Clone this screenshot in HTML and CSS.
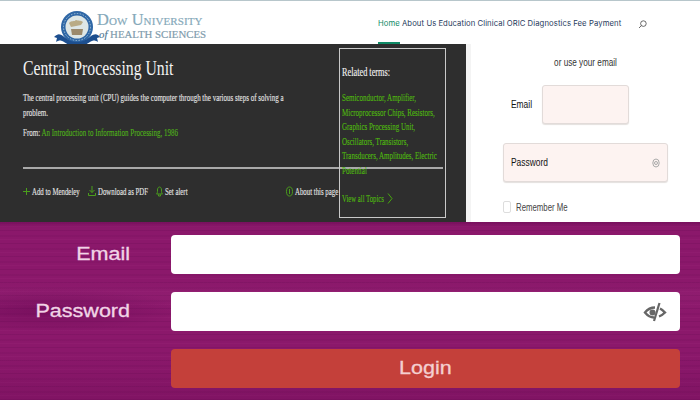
FILE: index.html
```html
<!DOCTYPE html>
<html lang="en">
<head>
  <meta charset="UTF-8" />
  <title>Dow University login</title>
  <link rel="stylesheet" href="styles.css">
</head>
<body>
  <div class="top">
    <header class="header">
      <div class="brand">
        <svg class="seal" width="48" height="36" viewBox="0 0 48 36">
          <circle cx="24" cy="17" r="16" fill="#2f67a6"/>
          <circle cx="24" cy="17" r="13.500" fill="none" stroke="#9fc0d8" stroke-width="1" stroke-dasharray="1.500 1.500"/>
          <circle cx="24" cy="17" r="11.500" fill="#dde6e6"/>
          <path d="M16 13c3-3 5-1 7-3 2 1 5 0 7 2l-2 3-5 1-5 1z" fill="#b9ab85"/>
          <path d="M18 19h12l-1 6h-10z" fill="#9c8a6c"/>
          <path d="M1 27c4-4 6-3 9-1l4 3c6 4 14 4 20 0l4-3c3-2 6-3 9 1l-3 1 1 4c-3-2-5-2-8 0-8 6-18 6-26 0-3-2-5-2-8 0l1-4z" fill="#1d4f8f"/>
        </svg>
        <div class="brand-text">
          <div class="brand-top">Dow University</div>
          <div class="brand-bottom"><em>of</em> HEALTH SCIENCES</div>
        </div>
      </div>
      <nav class="nav">
        <a class="nav-item active">Home</a>
        <a class="nav-item">About Us</a>
        <a class="nav-item">Education</a>
        <a class="nav-item">Clinical</a>
        <a class="nav-item">ORIC</a>
        <a class="nav-item">Diagnostics</a>
        <a class="nav-item">Fee Payment</a>
      </nav>
      <svg class="search" width="9" height="9" viewBox="0 0 9 9">
        <circle cx="5.400" cy="3.600" r="2.800" fill="none" stroke="#444" stroke-width=".8"/>
        <path d="M3.400 5.600L1 8" stroke="#444" stroke-width=".8"/>
      </svg>
    </header>

    <div class="content">
      <section class="panel">
        <h1 class="title"><span>Central Processing Unit</span></h1>
        <p class="desc"><span>The central processing unit (CPU) guides the computer through the various steps of solving a<br>problem.</span></p>
        <p class="from"><span>From: <a>An Introduction to Information Processing, 1986</a></span></p>
        <hr class="rule">
        <div class="actions">
          <div class="action mendeley">
            <svg width="7" height="9" viewBox="0 0 7 9"><path d="M3.500 1v7M0 4.500h7" stroke="#4a9e1c"/></svg>
            <span>Add to Mendeley</span>
          </div>
          <div class="action pdf">
            <svg width="8" height="10" viewBox="0 0 8 10"><path d="M4 0v6.500M1.500 4L4 6.500 6.500 4M.5 7v2.500h7V7" fill="none" stroke="#4a9e1c"/></svg>
            <span>Download as PDF</span>
          </div>
          <div class="action alert">
            <svg width="7" height="12" viewBox="0 0 7 12"><path d="M.5 9c1-1 1-2 1-4 0-4 4-4 4 0 0 2 0 3 1 4zM2.500 9.500v1.500h2V9.500" fill="none" stroke="#4a9e1c"/></svg>
            <span>Set alert</span>
          </div>
          <div class="action about">
            <svg width="7" height="11" viewBox="0 0 7 11"><ellipse cx="3.500" cy="5.500" rx="3" ry="4.500" fill="none" stroke="#4a9e1c"/><path d="M3.500 3v5" stroke="#4a9e1c"/></svg>
            <span>About this page</span>
          </div>
        </div>
        <aside class="related">
          <h2 class="related-title"><span>Related terms:</span></h2>
          <p class="related-links"><span>Semiconductor, Amplifier,<br>Microprocessor Chips, Resistors,<br>Graphics Processing Unit,<br>Oscillators, Transistors,<br>Transducers, Amplitudes, Electric<br>Potential</span></p>
          <div class="related-all">
            <span>View all Topics</span>
            <svg width="6" height="11" viewBox="0 0 6 11"><path d="M1 .5l4 5-4 5" fill="none" stroke="#47a80e"/></svg>
          </div>
        </aside>
      </section>

      <section class="signin">
        <p class="or-email">or use your email</p>
        <div class="email-row">
          <label class="small-label">Email</label>
          <div class="pink-input email-box"></div>
        </div>
        <div class="pink-input password-box">
          <span class="small-label">Password</span>
          <svg width="8" height="10" viewBox="0 0 8 10"><ellipse cx="4" cy="5" rx="3.200" ry="4" fill="none" stroke="#aaa"/><circle cx="4" cy="5" r="1.500" fill="none" stroke="#aaa"/></svg>
        </div>
        <div class="remember">
          <span class="check"></span>
          <span class="remember-text">Remember Me</span>
        </div>
      </section>
    </div>
  </div>

  <form class="login">
    <label class="login-label">Email</label>
    <div class="login-input"></div>
    <label class="login-label">Password</label>
    <div class="login-input eye-field">
      <svg width="24" height="20" viewBox="0 0 24 20">
        <path d="M12 5.500C7 5.500 4 8 2 10.500 4 13 7 15.500 11 15.500" fill="none" stroke="#666" stroke-width="2.400"/>
        <circle cx="9.500" cy="10.500" r="3" fill="#666"/>
        <path d="M16.500 1L11 19" stroke="#666" stroke-width="2.200"/>
        <path d="M17 6.500c2 1 3.500 2.500 5 4-1.500 1.500-3.500 3-6 4" fill="none" stroke="#666" stroke-width="2.400"/>
      </svg>
    </div>
    <button class="login-btn" type="button"><span>Login</span></button>
  </form>
</body>
</html>
```

FILE: styles.css
```css
* {
  box-sizing: border-box;
}
html, body {
  margin: 0;
  height: 400px;
  overflow: hidden;
}
body {
  background: #fff;
  font-family: "Liberation Sans", sans-serif;
}
.top {
  height: 222px;
  display: flex;
  flex-direction: column;
  overflow: hidden;
}

/* header */
.header {
  height: 44px;
  flex: none;
  display: flex;
  align-items: flex-start;
  border-top: 1px solid #b7c6cb;
  position: relative;
}
.brand {
  display: flex;
  align-items: flex-start;
  margin-left: 53px;
  width: 325px;
  padding-top: 9px;
}
.seal {
  flex: none;
}
.brand-text {
  margin-left: -5px;
  font-family: "Liberation Serif", serif;
  color: #86a9ba;
  white-space: nowrap;
}
.brand-top {
  font-size: 16.400px;
  line-height: 17px;
  font-variant: small-caps;
  letter-spacing: .1px;
  margin-left: 1px;
  margin-top: 1px;
  -webkit-text-stroke: .2px #86a9ba;
}
.brand-bottom {
  font-size: 10.800px;
  line-height: 13px;
  color: #7f9cad;
  margin-left: 3px;
  white-space: nowrap;
  -webkit-text-stroke: .2px #7f9cad;
}
.brand-bottom em {
  color: #3d6a8a;
}
.nav {
  display: flex;
  gap: 2px;
  height: 43px;
}
.nav-item {
  font-family: Inter, sans-serif;
  font-size: 7.700px;
  line-height: 10px;
  padding-top: 18px;
  color: #1f3a5c;
  white-space: nowrap;
  letter-spacing: .1px;
}
.nav-item.active {
  color: #0f8a66;
  border-bottom: 2px solid #0f8a66;
}
.search {
  margin: 19px 0 0 17px;
}

/* dark panel */
.content {
  flex: 1;
  display: flex;
  min-height: 0;
}
.panel {
  width: 466px;
  flex: none;
  background: #2e2e2e;
  position: relative;
  padding: 11px 0 0 23px;
  color: #e2e2e2;
  font-family: "Liberation Serif", serif;
}
.panel span {
  display: inline-block;
  transform-origin: left top;
  white-space: nowrap;
}
.title {
  margin: 0;
  font-size: 21px;
  line-height: 26px;
  font-weight: normal;
  color: #f2f2f2;
}
.title span {
  transform: scaleX(.75);
}
.desc {
  margin: 9px 0 0;
  font-size: 10.500px;
  line-height: 15px;
  -webkit-text-stroke: .15px;
}
.desc span {
  transform: scaleX(.665);
}
.from {
  margin: 5px 0 0;
  font-size: 10.500px;
  line-height: 15px;
  -webkit-text-stroke: .15px;
}
.from span {
  transform: scaleX(.665);
}
.from a {
  color: #4fae1a;
}
.rule {
  margin: 27px 0 0;
  width: 420px;
  height: 2px;
  border: 0;
  background: #a9a9a9;
}
.actions {
  display: flex;
  align-items: center;
  margin-top: 15px;
  font-size: 11px;
  line-height: 14px;
  -webkit-text-stroke: .15px;
}
.action {
  display: flex;
  align-items: center;
  gap: 2px;
}
.action svg {
  flex: none;
}
.action span {
  transform: scaleX(.62);
}
.mendeley {
  width: 65px;
}
.pdf {
  width: 68px;
}
.alert {
  width: 130px;
}

/* related terms box, sits over the rule */
.related {
  position: absolute;
  left: 339px;
  top: 4px;
  width: 107px;
  height: 170px;
  border: 1px solid #c9c9c9;
  padding: 16px 0 0 2px;
}
.related-title {
  margin: 0;
  font-size: 11.500px;
  line-height: 14px;
  font-weight: normal;
  color: #f2f2f2;
  -webkit-text-stroke: .15px;
}
.related-title span {
  transform: scaleX(.72);
}
.related-links {
  margin: 12px 0 0;
  font-size: 10.500px;
  line-height: 14.600px;
  color: #4fb80f;
  -webkit-text-stroke: .15px;
}
.related-links span {
  transform: scaleX(.665);
}
.related-all {
  display: flex;
  align-items: center;
  margin-top: 13px;
  height: 14px;
  font-size: 10.500px;
  line-height: 14px;
  color: #4fb80f;
  -webkit-text-stroke: .15px;
}
.related-all span {
  width: 44px;
  transform: scaleX(.64);
}
.related-all svg {
  margin-left: 1px;
}

/* sign in column */
.signin {
  flex: 1;
  border-left: 5px solid #f4f4f4;
  padding: 12px 0 0 32px;
  overflow: hidden;
}
.or-email {
  margin: 0 0 0 -32px;
  text-align: center;
  font-size: 10.500px;
  line-height: 13px;
  color: #333;
  transform: scaleX(.78);
}
.email-row {
  display: flex;
  align-items: center;
  gap: 6px;
  margin: 16px 0 0 8px;
}
.small-label {
  display: inline-block;
  font-size: 10px;
  color: #111;
  transform: scaleX(.84);
  transform-origin: left center;
}
.pink-input {
  height: 39px;
  background: #fdf3f1;
  border: 1px solid #e2dbd9;
  border-radius: 3px;
  box-shadow: 0 1px 1px #e4e0de;
}
.email-box {
  width: 87px;
}
.password-box {
  width: 165px;
  margin-top: 19px;
  padding: 0 7px 0 7px;
  display: flex;
  align-items: center;
  justify-content: space-between;
}
.remember {
  display: flex;
  align-items: center;
  gap: 5px;
  margin-top: 19px;
}
.check {
  width: 8px;
  height: 12px;
  border: 1px solid #ddd;
  border-radius: 2px;
}
.remember-text {
  display: inline-block;
  font-size: 10px;
  color: #444;
  transform: scaleX(.78);
  transform-origin: left center;
}

/* purple login form */
.login {
  height: 178px;
  padding: 13px 20px 0 0;
  display: grid;
  grid-template-columns: 130px 1fr;
  grid-auto-rows: 39px;
  column-gap: 41px;
  row-gap: 18px;
  align-items: center;
  background-color: #8b186b;
  background-image:
    radial-gradient(ellipse 130px 22px at 50px 88px, rgba(85,0,70,.35), transparent),
    linear-gradient(180deg, rgba(80,0,65,.25), transparent 6px, transparent 60px, rgba(170,60,140,.12) 72px, transparent 90px, transparent 130px, rgba(80,0,65,.18) 178px),
    repeating-linear-gradient(0deg, rgba(70,0,60,.12) 0 1px, transparent 1px 4px, rgba(190,70,150,.08) 4px 5px, transparent 5px 7px, rgba(70,0,60,.07) 7px 9px, transparent 9px 13px);
}
.login-label {
  text-align: right;
  font-size: 17.500px;
  color: #f1d4e6;
  -webkit-text-stroke: .3px #f1d4e6;
  transform: scaleX(1.23);
  transform-origin: right center;
}
.login-input {
  height: 39px;
  background: #fff;
  border-radius: 4px;
}
.eye-field {
  display: flex;
  align-items: center;
  justify-content: flex-end;
  padding-right: 13px;
}
.login-btn {
  grid-column: 2;
  height: 39px;
  background: #c4403a;
  border: none;
  border-radius: 4px;
  color: #f4cfd0;
  font-family: "Liberation Sans", sans-serif;
  font-size: 17.500px;
  -webkit-text-stroke: .3px #f4cfd0;
  padding: 0;
}
.login-btn span {
  display: inline-block;
  transform: scaleX(1.23);
}
```
